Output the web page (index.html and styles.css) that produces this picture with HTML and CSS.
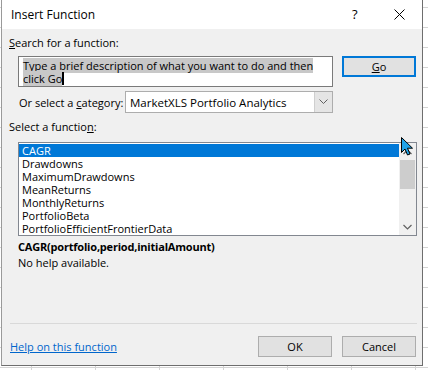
FILE: index.html
```html
<!DOCTYPE html>
<html lang="en">

<head>
    <meta charset="UTF-8">
    <meta name="viewport" content="width=device-width, initial-scale=1.0">
    <title>Insert Function</title>
    <link rel="stylesheet" href="styles.css">
</head>

<body>
    <div class="dialog">
        <!-- Title bar -->
        <div class="titlebar">
            <span class="title">Insert Function</span>
            <span class="help">?</span>
            <span class="close">
                <svg width="11" height="11" viewBox="0 0 11 11">
                    <path d="M0.5 0.5 L10.5 10.5 M10.5 0.5 L0.5 10.5" stroke="#000" stroke-width="1" fill="none" />
                </svg>
            </span>
        </div>

        <div class="content">
            <div class="label"><u>S</u>earch for a function:</div>
            <div class="search-row">
                <div class="search-box">
                    <span class="sel">Type a brief description of what you want to do and then </span><br><span class="sel">click Go</span><span class="caret"></span>
                </div>
                <button class="btn go"><u>G</u>o</button>
            </div>

            <div class="cat-row">
                <span class="cat-label">Or select a <u>c</u>ategory:</span>
                <div class="select">
                    <span class="select-value">MarketXLS Portfolio Analytics</span>
                    <span class="drop">
                        <svg width="9" height="6" viewBox="0 0 9 6">
                            <path d="M0.5 0.5 L4.5 4.5 L8.5 0.5" stroke="#606060" stroke-width="1" fill="none" />
                        </svg>
                    </span>
                </div>
            </div>

            <div class="label label-fn">Select a functio<u>n</u>:</div>
            <div class="listbox">
                <ul class="items">
                    <li class="selected">CAGR</li>
                    <li>Drawdowns</li>
                    <li>MaximumDrawdowns</li>
                    <li>MeanReturns</li>
                    <li>MonthlyReturns</li>
                    <li>PortfolioBeta</li>
                    <li>PortfolioEfficientFrontierData</li>
                </ul>
                <div class="scrollbar">
                    <span class="arrow up">
                        <svg width="9" height="6" viewBox="0 0 9 6">
                            <path d="M0.5 5 L4.5 1 L8.5 5" stroke="#606060" stroke-width="1.2" fill="none" />
                        </svg>
                    </span>
                    <div class="track"><div class="thumb"></div></div>
                    <span class="arrow down">
                        <svg width="9" height="6" viewBox="0 0 9 6">
                            <path d="M0.5 1 L4.5 5 L8.5 1" stroke="#606060" stroke-width="1.2" fill="none" />
                        </svg>
                    </span>
                </div>
                <!-- mouse pointer -->
                <svg class="cursor" width="14" height="20" viewBox="0 0 14 20">
                    <path d="M0.5 0.5 L0.5 15.5 L4 12 L6.5 18 L9 17 L6.5 11.2 L11.5 11.2 Z" fill="#1fa3e8" stroke="#000" stroke-width="1" stroke-linejoin="round" />
                </svg>
            </div>

            <div class="signature">CAGR(portfolio,period,initialAmount)</div>
            <div class="desc">No help available.</div>

            <div class="separator"></div>

            <div class="footer">
                <a href="#" class="help-link">Help on this function</a>
                <div class="buttons">
                    <button class="btn">OK</button>
                    <button class="btn">Cancel</button>
                </div>
            </div>
        </div>
    </div>
</body>

</html>
```
FILE: styles.css
```css
body {
    margin: 0;
    height: 370px;
    overflow: hidden;
    font-family: "Open Sans", "Noto Sans", sans-serif;
    font-size: 11px;
    color: #000;
    background-color: #fff;
    background-image:
        repeating-linear-gradient(90deg, transparent 0 31px, #d4d4d4 31px 32px, transparent 32px 64px),
        repeating-linear-gradient(180deg, transparent 0 7px, #d4d4d4 7px 8px, transparent 8px 20px);
}

.dialog {
    margin-left: 1px;
    width: 420px;
    height: 365px;
    background-color: #f0f0f0;
    border-left: 1px solid #9a9a9a;
    border-right: 1px solid #6e6e6e;
    border-bottom: 1px solid #6e6e6e;
    display: flex;
    flex-direction: column;
}

.titlebar {
    height: 29px;
    background-color: #fff;
    display: flex;
    align-items: center;
    padding-left: 9px;
    font-size: 12px;
}

.title {
    flex: 1;
    padding-bottom: 1px;
}

.help {
    width: 14px;
    margin-right: 28px;
    font-size: 13px;
    padding-bottom: 2px;
}

.close {
    display: flex;
    margin-right: 17px;
    padding-bottom: 1px;
}

.content {
    padding-left: 7px;
    display: flex;
    flex-direction: column;
    flex: 1;
}

.label {
    line-height: 16px;
    margin-top: 6px;
}

u {
    text-decoration-thickness: 1px;
    text-underline-offset: 1px;
}

.search-row {
    display: flex;
    margin-top: 5px;
    margin-left: 9px;
}

.search-box {
    width: 305px;
    border: 1px solid #7a7a7a;
    background-color: #fff;
    padding: 2px 4px 0 4px;
    line-height: 13px;
    height: 27px;
    white-space: nowrap;
}

.sel {
    background-color: #c8c8c8;
}

.caret {
    display: inline-block;
    width: 2px;
    height: 13px;
    background-color: #000;
    vertical-align: top;
}

.btn {
    font-family: inherit;
    font-size: 11px;
    color: #000;
    width: 74px;
    height: 21px;
    background-color: #e1e1e1;
    border: 1px solid #adadad;
    padding: 0;
    margin: 0;
}

.go {
    margin-left: 9px;
    border: 2px solid #0078d7;
}

.cat-row {
    display: flex;
    align-items: center;
    margin-top: 4px;
    margin-left: 10px;
}

.cat-label {
    width: 106px;
    white-space: nowrap;
}

.select {
    width: 206px;
    height: 20px;
    border: 1px solid #adadad;
    background-color: #fff;
    display: flex;
    align-items: center;
}

.select-value {
    flex: 1;
    padding-left: 4px;
    font-size: 11.5px;
}

.drop {
    width: 17px;
    height: 20px;
    background-color: #e5e5e5;
    border-left: 1px solid #cfcfcf;
    display: flex;
    align-items: center;
    justify-content: center;
}

.label-fn {
    margin-top: 6px;
}

.listbox {
    position: relative;
    margin-top: 7px;
    margin-left: 9px;
    width: 397px;
    height: 92px;
    border: 1px solid #828790;
    background-color: #fff;
    display: flex;
}

.items {
    list-style: none;
    margin: 0;
    padding: 1px 0 0 0;
    flex: 1;
}

.items li {
    height: 13px;
    line-height: 13px;
    padding-left: 3px;
}

.items .selected {
    background-color: #0078d7;
    color: #fff;
}

.scrollbar {
    width: 17px;
    background-color: #f0f0f0;
    display: flex;
    flex-direction: column;
    align-items: center;
}

.arrow {
    height: 17px;
    display: flex;
    align-items: center;
}

.track {
    flex: 1;
    width: 100%;
    display: flex;
    flex-direction: column;
    align-items: center;
}

.thumb {
    width: 15px;
    height: 29px;
    background-color: #cdcdcd;
}

.cursor {
    position: absolute;
    left: 382px;
    top: -6px;
}

.signature {
    font-weight: bold;
    line-height: 16px;
    margin-top: 3px;
    margin-left: 9px;
    letter-spacing: -0.2px;
}

.desc {
    line-height: 16px;
    margin-left: 9px;
}

.separator {
    margin-top: 52px;
    height: 1px;
    margin-left: 1px;
    width: 407px;
    background-color: #d9d9d9;
}

.footer {
    display: flex;
    align-items: center;
    margin-top: 12px;
}

.help-link {
    flex: 1;
    color: #0066cc;
    margin-left: 1px;
}

.buttons {
    display: flex;
    gap: 10px;
    margin-right: 6px;
}
```
